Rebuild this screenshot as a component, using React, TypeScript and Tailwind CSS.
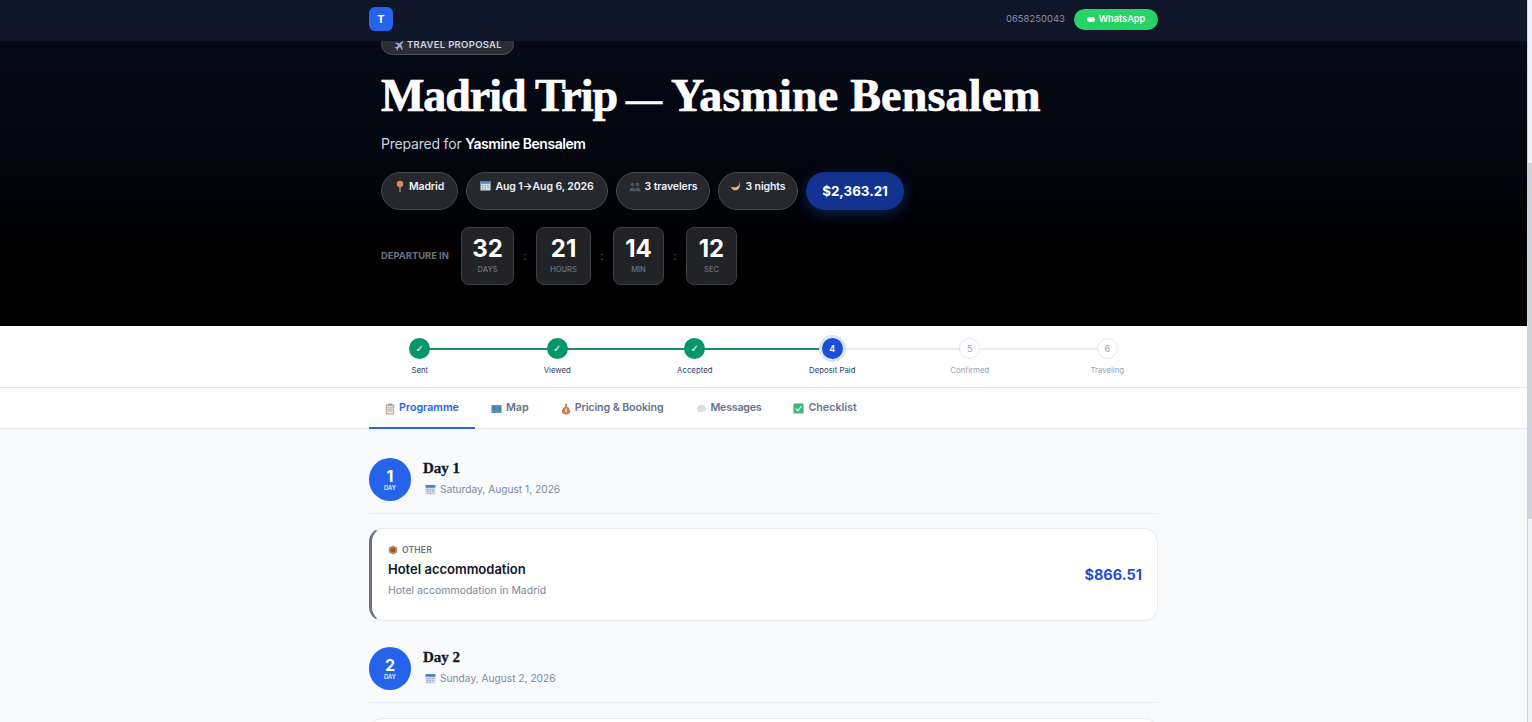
const steps = [
  { label: "Sent", state: "done" },
  { label: "Viewed", state: "done" },
  { label: "Accepted", state: "done" },
  { label: "Deposit Paid", state: "current" },
  { label: "Confirmed", state: "todo" },
  { label: "Traveling", state: "todo" },
];

const Plane = () => (
  <svg viewBox="0 0 16 16" className="w-[11px] h-[11px] shrink-0">
    <path d="M13 2 9.5 5 4 3.5 3 4.5 7.5 7.5 5 10.5 3 10l-1 1 3 1.500 1.500 3 1-1-.5-2 3-2.500 3 4.500 1-1L12 6.500 15 3c.5-1-1-1.500-2-1z" fill="#93b4d8" />
  </svg>
);

const Pin = () => (
  <svg viewBox="0 0 12 16" className="w-[10px] h-[13px] shrink-0">
    <circle cx="6" cy="5" r="4" fill="#d98a5b" />
    <rect x="5.300" y="8" width="1.400" height="7" fill="#b9a08a" />
  </svg>
);

const Calendar = () => (
  <svg viewBox="0 0 12 12" className="w-[11px] h-[11px] shrink-0">
    <rect x="0.500" y="1" width="11" height="10.500" rx="1" fill="#d5dbe5" />
    <rect x="0.500" y="1" width="11" height="3" rx="1" fill="#4d82d6" />
    <path d="M2 6h1.500M5 6h1.500M8 6h1.500M2 8h1.500M5 8h1.500M8 8h1.500M2 10h1.500M5 10h1.500" stroke="#8a97ab" strokeWidth="1" />
  </svg>
);

const People = () => (
  <svg viewBox="0 0 14 12" className="w-[12px] h-[10px] shrink-0 mt-[2px]">
    <circle cx="4" cy="3" r="2.200" fill="#4b5563" />
    <circle cx="10" cy="3" r="2.200" fill="#4b5563" />
    <path d="M.5 11c0-3 1.500-4.500 3.500-4.500S7 8 7 11zM7 11c0-3 1-4.500 3-4.500s3.500 1.500 3.500 4.500z" fill="#4b5563" />
  </svg>
);

const Moon = () => (
  <svg viewBox="0 0 12 12" className="w-[11px] h-[11px] shrink-0">
    <path d="M10.500 1c.5 4-2 7-6 7-1.500 0-3-.3-4-1 .8 2.500 3 4.300 5.500 4.300 3.500 0 6-3.500 4.500-10.300z" fill="#e8ad72" />
  </svg>
);

const Clipboard = () => (
  <svg viewBox="0 0 12 14" className="w-[10px] h-[12px] shrink-0">
    <rect x="1" y="1.500" width="10" height="12" rx="1" fill="#c98f63" />
    <rect x="2" y="3" width="8" height="9.500" fill="#e5e7eb" />
    <rect x="3.500" y="0.500" width="5" height="2.500" fill="#9ca3af" />
    <path d="M3 5.500h6M3 7.500h6M3 9.500h6" stroke="#9ca3af" strokeWidth="0.800" />
  </svg>
);

const MapIcon = () => (
  <svg viewBox="0 0 14 12" className="w-[11px] h-[10px] shrink-0">
    <rect x="0.500" y="1" width="13" height="10" fill="#4b8fd0" />
    <path d="M3 2l3 1 1 3-3 2-1.500-3zM9 4l3-1 1 4-3 2z" fill="#4c8a64" />
  </svg>
);

const Bag = () => (
  <svg viewBox="0 0 12 14" className="w-[10px] h-[12px] shrink-0">
    <path d="M4.500 1h3l-.7 3c2.500 1 4.200 3.500 4.200 6 0 2.500-2 3.500-5 3.500S1 12.500 1 10c0-2.500 1.700-5 4.200-6z" fill="#c77f4c" />
    <rect x="5" y="6" width="2" height="5" fill="#f0d6b8" />
  </svg>
);

const Bubble = () => (
  <svg viewBox="0 0 14 12" className="w-[11px] h-[10px] shrink-0">
    <ellipse cx="7" cy="5.500" rx="6" ry="4.500" fill="#d9dee6" />
    <path d="M3 8 2 11l4-2z" fill="#d9dee6" />
  </svg>
);

const Check = () => (
  <svg viewBox="0 0 12 12" className="w-[11px] h-[11px] shrink-0">
    <rect x="0.500" y="0.500" width="11" height="11" rx="1" fill="#3fb57a" />
    <path d="M3 6.300 5.200 8.500 9.300 3.500" stroke="#fff" strokeWidth="1.300" fill="none" />
  </svg>
);

const Box = () => (
  <svg viewBox="0 0 12 12" className="w-[10px] h-[10px] shrink-0">
    <path d="M6 .5 11 3v6l-5 2.500L1 9V3z" fill="#c98a5e" />
    <path d="M6 3 9 4.500v3L6 9 3 7.500v-3z" fill="#8d5a35" />
  </svg>
);

const tabs = [
  { label: "Programme", icon: <Clipboard />, active: true, track: "" },
  { label: "Map", icon: <MapIcon />, track: "" },
  { label: "Pricing & Booking", icon: <Bag />, track: "tracking-[-0.12px]" },
  { label: "Messages", icon: <Bubble />, track: "tracking-[-0.25px]" },
  { label: "Checklist", icon: <Check />, track: "" },
];

const chips = [
  { icon: <Pin />, text: "Madrid", cls: "w-[77px]" },
  { icon: <Calendar />, text: "Aug 1→Aug 6, 2026", cls: "w-[142px]" },
  { icon: <People />, text: "3 travelers", cls: "w-[94px]" },
  { icon: <Moon />, text: "3 nights", cls: "w-[80px]" },
];

const countdown = [
  { value: "32", unit: "DAYS", cls: "w-[53px]" },
  { value: "21", unit: "HOURS", cls: "w-[55px]" },
  { value: "14", unit: "MIN", cls: "w-[51px]" },
  { value: "12", unit: "SEC", cls: "w-[51px]" },
];

const DayHeader = ({ n, date }: { n: number; date: string }) => (
  <div className="flex items-center gap-3 pb-3 border-b border-[#e9eef4]">
    <div className="w-[42px] h-[43px] pt-[2px] rounded-full bg-[#2563eb] text-white flex flex-col items-center justify-center shrink-0">
      <span className="text-[16px] leading-[15px] font-bold">{n}</span>
      <span className="text-[6px] leading-[8px] font-medium">DAY</span>
    </div>
    <div className="pb-[2px]">
      <p className="font-['Liberation_Serif'] font-bold text-[15px] leading-[18px] text-[#0f172a] [-webkit-text-stroke:0.3px_#0f172a]">Day {n}</p>
      <p className="flex items-center gap-[4px] pl-[2px] mt-[3px] text-[10.2px] leading-[18px] text-[#7f8a9c]">
        <Calendar />
        {date}
      </p>
    </div>
  </div>
);

export default function App() {
  return (
    <div className="h-[722px] w-[1532px] overflow-hidden flex font-['Inter'] bg-[#f8fafc]">
      <div className="w-[1527px] shrink-0 flex flex-col">
        <header className="h-[41px] bg-[#0f1629] shrink-0 relative z-10">
          <div className="w-[789px] mx-auto h-full flex items-center justify-between pb-[3px]">
            <div className="w-[24px] h-[24px] rounded-[6px] bg-[#2563eb] text-white text-[11px] font-bold flex items-center justify-center">T</div>
            <div className="flex items-center gap-[9px]">
              <span className="text-[9.5px] text-[#8a93a3]">0658250043</span>
              <span className="h-[21px] w-[84px] rounded-full bg-[#25d366] text-white text-[9.2px] font-semibold flex items-center justify-center gap-[4px]">
                <span className="w-[8px] h-[5px] rounded-full bg-[#e8f8ee]" />
                WhatsApp
              </span>
            </div>
          </div>
        </header>

        <section className="h-[285px] shrink-0 overflow-hidden bg-gradient-to-b from-[#060a16] via-[#03050c] to-[#000000]">
          <div className="w-[789px] mx-auto px-3">
            <div className="-mt-[8px] h-[22px] w-[133px] pt-[2px] rounded-full bg-[#2a2d33] border border-[#4a4d53] flex items-center justify-center gap-[3px] text-[9.5px] leading-[6px] font-semibold tracking-[0.3px] text-[#cbd5e1]">
              <Plane />
              TRAVEL PROPOSAL
            </div>
            <h1 className="mt-[12px] h-[58px] font-['Liberation_Serif'] font-bold text-[46px] leading-[58px] text-white whitespace-nowrap [-webkit-text-stroke:0.7px_white]">
              <span className="tracking-[-1.05px]">Madrid Trip</span>
              <span className="text-[36px]"> — </span>
              <span className="tracking-[0.2px]">Yasmine Bensalem</span>
            </h1>
            <p className="mt-[9px] text-[14px] leading-[20px] tracking-[-0.2px] text-[#cbd5e1]">
              Prepared for <strong className="font-semibold text-white tracking-[-0.45px]">Yasmine Bensalem</strong>
            </p>
            <div className="mt-[18px] flex items-stretch gap-2 h-[38px]">
              {chips.map((c) => (
                <div key={c.text} className={`${c.cls} rounded-full bg-[#26282d] border border-[#46484d] flex items-start justify-center gap-[4px] pt-[7px] text-[10.5px] leading-[14px] font-semibold tracking-[-0.1px] text-[#eef2f7] whitespace-nowrap`}>
                  {c.icon}
                  {c.text}
                </div>
              ))}
              <div className="w-[98px] rounded-full bg-[#11338f] shadow-[0_4px_14px_rgba(37,99,235,0.3)] text-white text-[13.4px] font-bold flex items-center justify-center">
                $2,363.21
              </div>
            </div>
            <div className="mt-[17px] flex items-center">
              <span className="w-[80px] text-[9.4px] font-bold text-[#6b7280] whitespace-nowrap">DEPARTURE IN</span>
              {countdown.map((c, i) => (
                <div key={c.unit} className="flex items-center">
                  {i > 0 && <span className="w-[22px] text-center text-[12px] text-[#4b5563]">:</span>}
                  <div className={`${c.cls} h-[58px] pb-[3px] rounded-[8px] bg-[#222327] border border-[#3f4044] flex flex-col items-center justify-center`}>
                    <span className="text-[24px] leading-[28px] font-bold text-white">{c.value}</span>
                    <span className="mt-[2px] text-[7.5px] leading-[10px] font-medium text-[#6b7280]">{c.unit}</span>
                  </div>
                </div>
              ))}
            </div>
          </div>
        </section>

        <section className="h-[62px] bg-white border-b border-[#e2e8f0] shrink-0">
          <div className="w-[825px] mx-auto grid grid-cols-6 pt-[12px]">
            {steps.map((s, i) => (
              <div key={s.label} className="relative flex flex-col items-center">
                {i < steps.length - 1 && (
                  <div className={`absolute left-1/2 top-[10px] w-full h-[2px] ${i < 3 ? "bg-[#1a8c70]" : "bg-[#e8edf3]"}`} />
                )}
                <div
                  className={`relative w-[21px] h-[21px] rounded-full flex items-center justify-center text-[9px] ${
                    s.state === "done"
                      ? "bg-[#059669] text-white font-['DejaVu_Sans'] text-[10px]"
                      : s.state === "current"
                      ? "bg-[#1d4ed8] text-white font-semibold ring-[3px] ring-[#dbe5f5]"
                      : "bg-white border border-[#e2e8f0] text-[#94a3b8]"
                  }`}
                >
                  {s.state === "done" ? "✓" : i + 1}
                </div>
                <span className={`mt-[5px] text-[7.8px] leading-[12px] ${s.state === "todo" ? "text-[#94a3b8]" : "text-[#334155]"}`}>{s.label}</span>
              </div>
            ))}
          </div>
        </section>

        <nav className="h-[41px] bg-white border-b border-[#e2e8f0] shrink-0">
          <div className="w-[789px] mx-auto flex h-full">
            {tabs.map((t) => (
              <div
                key={t.label}
                className={`px-4 pt-[2px] flex items-center gap-[4px] text-[10.7px] font-semibold -mb-px border-b-2 ${t.track} ${
                  t.active ? "border-[#2563eb] text-[#2563eb]" : "border-transparent text-[#64748b]"
                }`}
              >
                {t.icon}
                {t.label}
              </div>
            ))}
          </div>
        </nav>

        <main className="w-[789px] mx-auto pt-[29px]">
          <DayHeader n={1} date="Saturday, August 1, 2026" />
          <div className="mt-[14px] h-[93px] rounded-[14px] bg-white border border-[#e6ebf2] border-l-[3px] border-l-[#6b7280] flex items-center justify-between pl-[16px] pr-[15px]">
            <div className="pb-[8px]">
              <p className="flex items-center gap-[4px] text-[8.5px] leading-[12px] font-semibold tracking-[0.2px] text-[#64748b]">
                <Box />
                OTHER
              </p>
              <p className="mt-[4px] text-[13px] leading-[18px] font-semibold text-[#0f172a]">Hotel accommodation</p>
              <p className="mt-[6px] text-[10.5px] leading-[14px] text-[#7b8798]">Hotel accommodation in Madrid</p>
            </div>
            <span className="mt-[1px] text-[14.5px] font-bold text-[#1d4ed8]">$866.51</span>
          </div>
          <div className="mt-[26px]">
            <DayHeader n={2} date="Sunday, August 2, 2026" />
          </div>
          <div className="mt-[15px] h-[60px] rounded-[14px] bg-white border border-[#e6ebf2]" />
        </main>
      </div>
      <div className="w-[5px] shrink-0 flex">
        <div className="w-[1px] bg-[#9ca3af]/40" />
        <div className="w-[4px] bg-[#f1f5f9]">
          <div className="mt-[163px] h-[356px] bg-[#cfd4dc]" />
        </div>
      </div>
    </div>
  );
}
